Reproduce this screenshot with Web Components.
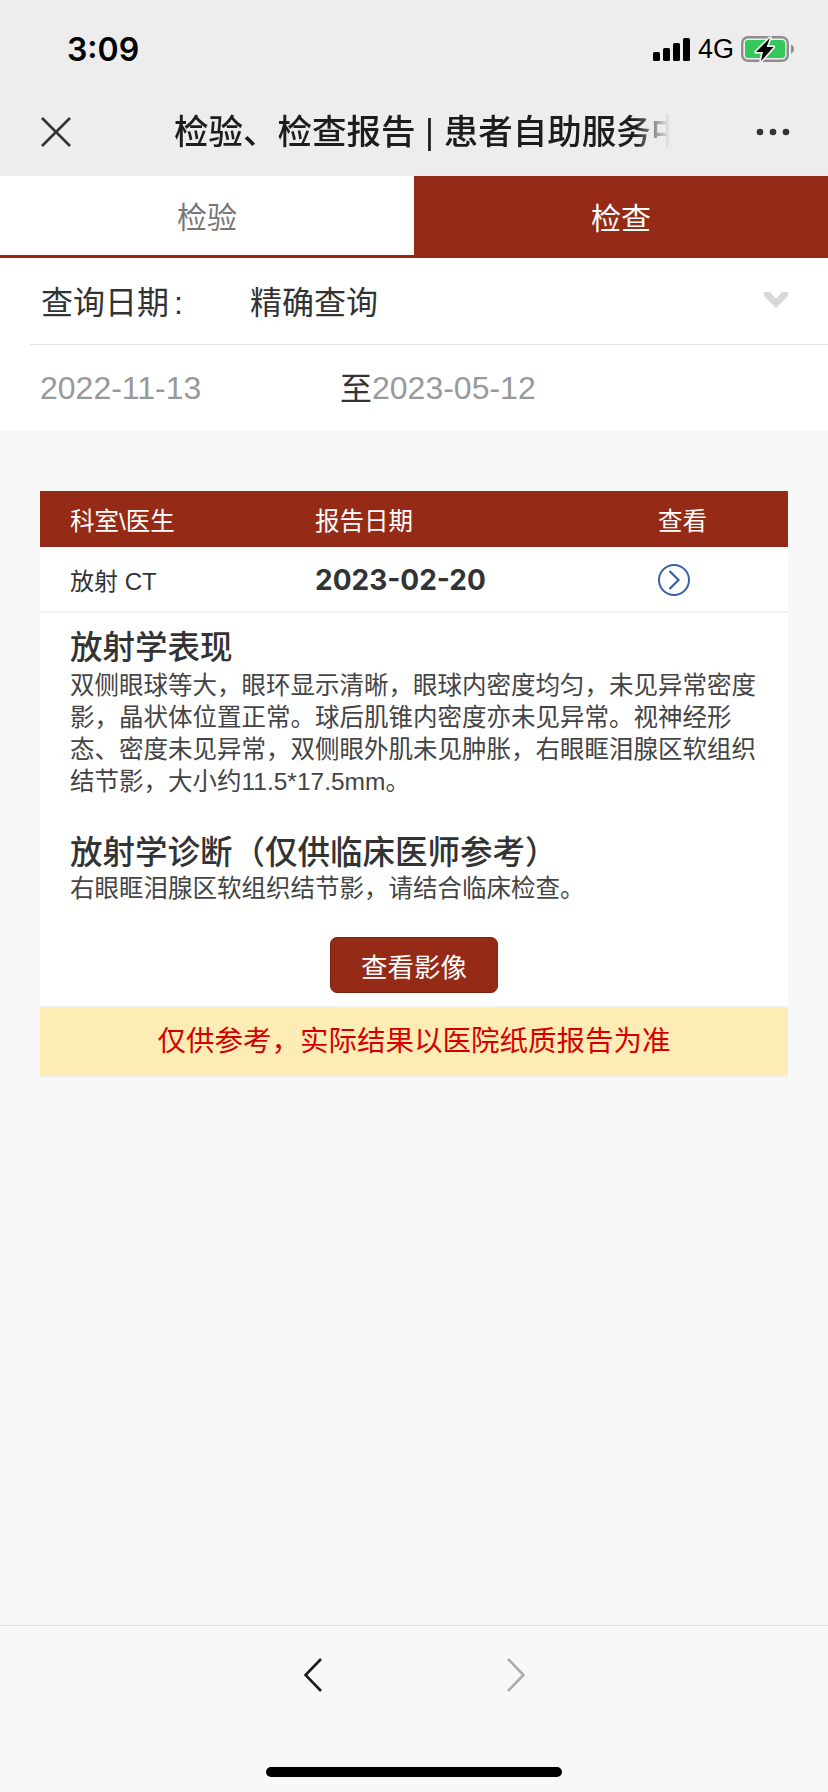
<!DOCTYPE html>
<html lang="zh">
<head>
<meta charset="utf-8">
<title>检验、检查报告</title>
<style>
    html, body {
        margin: 0;
        padding: 0;
    }
    body {
        width: 828px;
        height: 1792px;
        display: flex;
        flex-direction: column;
        overflow: hidden;
        background-color: #f8f8f8;
        color: #333;
        font-family: "Liberation Sans", "Noto Sans CJK SC", sans-serif;
    }
</style>
</head>
<body>
    <top-bar></top-bar>
    <tab-bar></tab-bar>
    <query-panel></query-panel>
    <report-table>
        <report-section title="放射学表现">双侧眼球等大，眼环显示清晰，眼球内密度均匀，未见异常密度影，晶状体位置正常。球后肌锥内密度亦未见异常。视神经形态、密度未见异常，双侧眼外肌未见肿胀，右眼眶泪腺区软组织结节影，大小约11.5*17.5mm。</report-section>
        <report-section title="放射学诊断（仅供临床医师参考）">右眼眶泪腺区软组织结节影，请结合临床检查。</report-section>
    </report-table>
    <tool-bar></tool-bar>

<script>
class TopBar extends HTMLElement {
    constructor() {
        super();
        this.shadow = this.attachShadow({ mode: 'open' });
    }

    connectedCallback() {
        this.shadow.innerHTML =
        /*html*/`
        <style>
            :host{
                display: block;
                height: 176px;
                flex: none;
                background-color: #ededed;
                color: #000;
            }
            .status{
                display: flex;
                align-items: center;
                height: 88px;
                padding: 10px 34px 0 67px;
                box-sizing: border-box;
            }
            .time{
                font-family: Inter, "Liberation Sans", sans-serif;
                font-size: 32px;
                font-weight: 600;
                flex: 1;
            }
            .net{
                font-size: 27px;
                margin: 0 7px 0 8px;
            }
            svg{
                display: block;
                flex: none;
            }
            .nav{
                display: flex;
                align-items: center;
                height: 88px;
                padding: 0 38px 0 41px;
                box-sizing: border-box;
            }
            .title{
                width: 496px;
                margin-left: 103px;
                font-size: 34.5px;
                font-weight: 500;
                line-height: 48px;
                color: #1d1d1d;
                white-space: nowrap;
                overflow: hidden;
                -webkit-mask-image: linear-gradient(to right, #000 93%, transparent 100%);
                mask-image: linear-gradient(to right, #000 93%, transparent 100%);
            }
            .more{
                margin-left: auto;
            }
        </style>
        <div class="status">
            <span class="time">3:09</span>
            <svg width="37" height="23" viewBox="0 0 37 23" fill="#000">
                <rect x="0" y="14" width="7" height="9" rx="1.5"/>
                <rect x="10" y="10" width="7" height="13" rx="1.5"/>
                <rect x="20" y="5" width="7" height="18" rx="1.5"/>
                <rect x="30" y="0" width="7" height="23" rx="1.5"/>
            </svg>
            <span class="net">4G</span>
            <svg width="53" height="26" viewBox="0 0 53 26">
                <rect x="1.2" y="1.2" width="45.6" height="23.6" rx="6" fill="none" stroke="#8e8e8e" stroke-width="2.4"/>
                <rect x="4" y="4" width="40" height="18" rx="3" fill="#34c759"/>
                <path d="M50 8.5 C52 9.5 53 11 53 13 C53 15 52 16.5 50 17.5 Z" fill="#8e8e8e"/>
                <path d="M29 2 L15 16 H22 L20 25 L32.5 11 H25.5 Z" fill="#000" stroke="#ededed" stroke-width="3.5" stroke-linejoin="round" paint-order="stroke"/>
            </svg>
        </div>
        <div class="nav">
            <svg width="30" height="30" viewBox="0 0 30 30" fill="none" stroke="#333" stroke-width="2.6">
                <path d="M1 1 L29 29 M29 1 L1 29"/>
            </svg>
            <div class="title">检验、检查报告 | 患者自助服务中心</div>
            <svg class="more" width="34" height="8" viewBox="0 0 34 8" fill="#333">
                <circle cx="4" cy="4" r="3.3"/>
                <circle cx="17" cy="4" r="3.3"/>
                <circle cx="30" cy="4" r="3.3"/>
            </svg>
        </div>
        `
    }
}

class TabBar extends HTMLElement {
    constructor() {
        super();
        this.shadow = this.attachShadow({ mode: 'open' });
    }

    connectedCallback() {
        this.shadow.innerHTML =
        /*html*/`
        <style>
            :host{
                display: grid;
                grid-template-columns: 414px 414px;
                height: 82px;
                flex: none;
                background-color: #fff;
                font-size: 30px;
            }
            .tab{
                display: flex;
                align-items: center;
                justify-content: center;
                padding-bottom: 2px;
                box-sizing: border-box;
            }
            .off{
                color: #777;
                border-bottom: 3px solid #952b16;
            }
            .on{
                color: #fff;
                background-color: #952b16;
            }
        </style>
        <div class="tab off">检验</div>
        <div class="tab on">检查</div>
        `
    }
}

class QueryPanel extends HTMLElement {
    constructor() {
        super();
        this.shadow = this.attachShadow({ mode: 'open' });
    }

    connectedCallback() {
        this.shadow.innerHTML =
        /*html*/`
        <style>
            :host{
                display: block;
                height: 173px;
                flex: none;
                background-color: #fff;
                font-size: 32px;
            }
            .row{
                display: flex;
                align-items: center;
                height: 87px;
                margin-left: 30px;
                padding: 0 40px 3px 11px;
                box-sizing: border-box;
                border-bottom: 1px solid #e4e4e4;
                color: #333;
            }
            .label{
                width: 209px;
            }
            .colon{
                margin-left: 5px;
            }
            svg{
                margin-left: auto;
                margin-top: 0;
            }
            .dates{
                display: flex;
                align-items: center;
                height: 86px;
                padding-left: 40px;
                box-sizing: border-box;
                color: #999;
                font-size: 32px;
            }
            .from{
                width: 300px;
            }
            .to{
                color: #333;
                margin-bottom: 4px;
            }
        </style>
        <div class="row">
            <span class="label">查询日期<span class="colon">:</span></span>
            <span>精确查询</span>
            <svg width="24" height="16" viewBox="0 0 24 16" fill="#d8d8d8">
                <path d="M0 0 L6 0 L12 7 L18 0 L24 0 L24 4 L12 16 L0 4 Z"/>
            </svg>
        </div>
        <div class="dates">
            <span class="from">2022-11-13</span>
            <span class="to">至</span>
            <span>2023-05-12</span>
        </div>
        `
    }
}

class ReportSection extends HTMLElement {
    constructor() {
        super();
        this.shadow = this.attachShadow({ mode: 'open' });
    }

    connectedCallback() {
        const title = this.getAttribute("title")
        this.shadow.innerHTML =
        /*html*/`
        <style>
            :host{
                display: block;
                margin-bottom: 32px;
            }
            :host(:first-child){
                margin-bottom: 35px;
            }
            h3{
                margin: 0 0 2px 0;
                font-size: 32.5px;
                font-weight: 500;
                line-height: 40px;
                color: #333;
            }
            :host(:last-child) h3{
                margin-bottom: 0;
            }
            p{
                margin: 0;
                font-size: 24.5px;
                line-height: 32px;
                color: #444;
            }
        </style>
        <h3>${title}</h3>
        <p><slot></slot></p>
        `
    }
}

class ReportTable extends HTMLElement {
    constructor() {
        super();
        this.shadow = this.attachShadow({ mode: 'open' });
    }

    connectedCallback() {
        this.shadow.innerHTML =
        /*html*/`
        <style>
            :host{
                display: block;
                flex: 1;
                margin: 60px 40px 0 40px;
            }
            .cols{
                display: grid;
                grid-template-columns: 245px 343px 1fr;
                align-items: center;
                padding-left: 30px;
            }
            .head{
                height: 56px;
                background-color: #952b16;
                color: #fff;
                font-size: 24.5px;
            }
            .item{
                height: 64px;
                background-color: #fff;
                border-bottom: 2px solid #f1f1f1;
                box-sizing: content-box;
                font-size: 24px;
                color: #333;
            }
            .date{
                font-family: Inter, "Liberation Sans", sans-serif;
                font-size: 28px;
                font-weight: 700;
                margin-top: 2px;
            }
            .item svg{
                display: block;
                margin-top: 1px;
            }
            .body{
                background-color: #fff;
                padding: 15px 30px 12px 30px;
                display: flex;
                flex-direction: column;
            }
            .btn{
                align-self: center;
                width: 168px;
                height: 56px;
                display: flex;
                align-items: center;
                justify-content: center;
                box-sizing: border-box;
                background-color: #952b16;
                border: 1px solid #7f2412;
                border-radius: 7px;
                color: #fff;
                font-size: 26.5px;
            }
            .note{
                margin-top: 2px;
                height: 71px;
                padding-bottom: 7px;
                box-sizing: border-box;
                display: flex;
                align-items: center;
                justify-content: center;
                background-color: #feecb5;
                border-bottom: 2px solid #f2f2f2;
                color: #d40000;
                font-size: 28.5px;
            }
        </style>
        <div class="cols head">
            <span>科室\\医生</span>
            <span>报告日期</span>
            <span>查看</span>
        </div>
        <div class="cols item">
            <span>放射 CT</span>
            <span class="date">2023-02-20</span>
            <svg width="32" height="32" viewBox="0 0 32 32" fill="none" stroke="#3b5ea8" stroke-width="2">
                <circle cx="16" cy="16" r="15"/>
                <path d="M11.5 7 L20.5 16 L11.5 25" stroke-width="2.2"/>
            </svg>
        </div>
        <div class="body">
            <slot></slot>
            <div class="btn">查看影像</div>
        </div>
        <div class="note">仅供参考，实际结果以医院纸质报告为准</div>
        `
    }
}

class ToolBar extends HTMLElement {
    constructor() {
        super();
        this.shadow = this.attachShadow({ mode: 'open' });
    }

    connectedCallback() {
        this.shadow.innerHTML =
        /*html*/`
        <style>
            :host{
                display: flex;
                flex-direction: column;
                align-items: center;
                height: 167px;
                flex: none;
                box-sizing: border-box;
                border-top: 1px solid #dedede;
                background-color: #f8f8f8;
            }
            .arrows{
                display: flex;
                gap: 185px;
                margin-top: 32px;
            }
            svg{
                display: block;
            }
            .home{
                width: 296px;
                height: 10px;
                margin-top: 75px;
                border-radius: 5px;
                background-color: #000;
            }
        </style>
        <div class="arrows">
            <svg width="18" height="34" viewBox="0 0 18 34" fill="none" stroke="#1a1a1a" stroke-width="2.6">
                <path d="M17 1 L1.5 17 L17 33"/>
            </svg>
            <svg width="18" height="34" viewBox="0 0 18 34" fill="none" stroke="#ababab" stroke-width="2.6">
                <path d="M1 1 L16.5 17 L1 33"/>
            </svg>
        </div>
        <div class="home"></div>
        `
    }
}

customElements.define('top-bar', TopBar);
customElements.define('tab-bar', TabBar);
customElements.define('query-panel', QueryPanel);
customElements.define('report-section', ReportSection);
customElements.define('report-table', ReportTable);
customElements.define('tool-bar', ToolBar);
</script>
</body>
</html>
